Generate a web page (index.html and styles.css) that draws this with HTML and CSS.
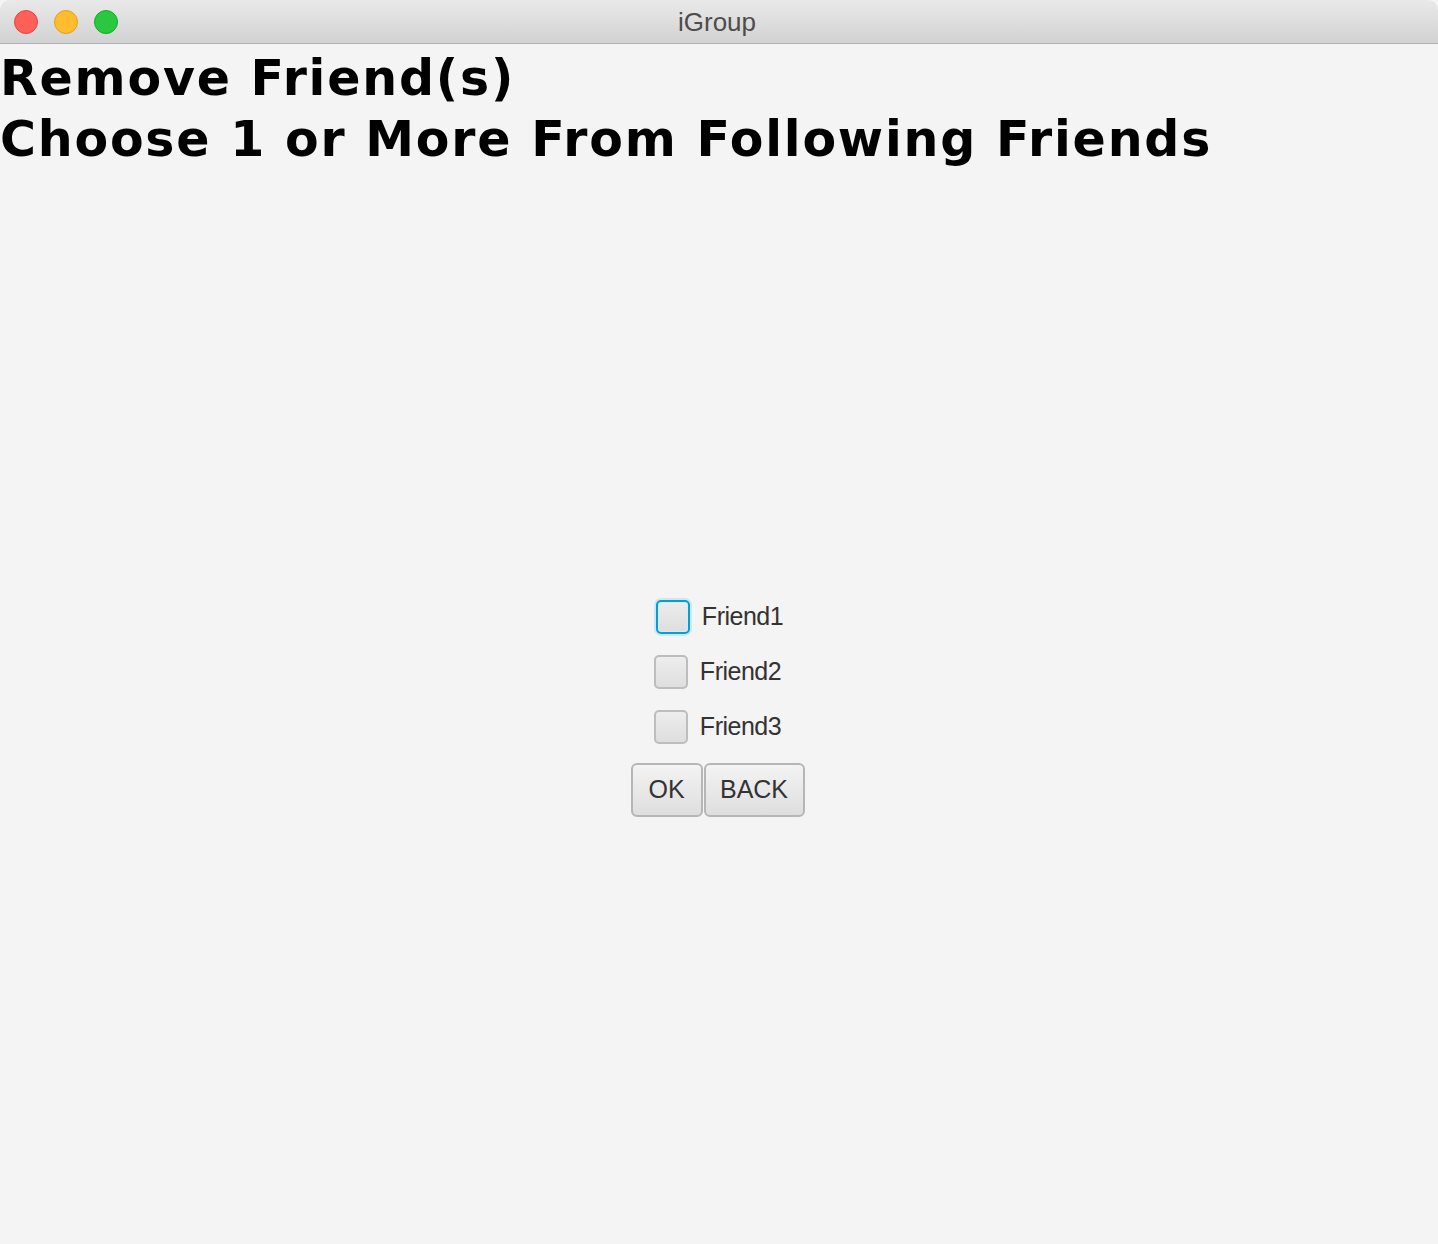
FILE: index.html
```html
<!DOCTYPE html>
<html>
<head>
<meta charset="utf-8">
<title>iGroup</title>
<link rel="stylesheet" href="styles.css">
</head>
<body>
<div class="window">
  <div class="titlebar">
    <div class="lights">
      <span class="light red"></span>
      <span class="light yellow"></span>
      <span class="light green"></span>
    </div>
    <div class="title">iGroup</div>
  </div>
  <div class="content">
    <div class="headings">
      <h1 class="heading">Remove Friend(s)</h1>
      <h1 class="heading">Choose 1 or More From Following Friends</h1>
    </div>
    <div class="center">
      <div class="group">
        <label class="check-row"><span class="box focused"></span><span class="check-label">Friend1</span></label>
        <label class="check-row"><span class="box"></span><span class="check-label">Friend2</span></label>
        <label class="check-row"><span class="box"></span><span class="check-label">Friend3</span></label>
        <div class="buttons">
          <button class="btn btn-ok">OK</button>
          <button class="btn btn-back">BACK</button>
        </div>
      </div>
    </div>
  </div>
</div>
</body>
</html>
```

FILE: styles.css
```css
html, body {
  margin: 0;
  padding: 0;
  height: 100%;
  background: #f4f4f4;
}
.window {
  width: 1438px;
  height: 1244px;
  display: flex;
  flex-direction: column;
  background: #f4f4f4;
  overflow: hidden;
  border-radius: 10px 10px 0 0;
}
.titlebar {
  height: 43px;
  flex: 0 0 43px;
  position: relative;
  background: linear-gradient(#e9e9e9, #d2d2d2);
  border-bottom: 1px solid #b1b1b1;
  display: flex;
  align-items: center;
  justify-content: center;
}
.lights {
  position: absolute;
  left: 14px;
  top: 10px;
  display: flex;
  gap: 16px;
}
.light {
  width: 24px;
  height: 24px;
  border-radius: 50%;
  box-sizing: border-box;
}
.red { background: #fe5f57; border: 1px solid #e2463f; }
.yellow { background: #febc2e; border: 1px solid #e1a116; }
.green { background: #29c840; border: 1px solid #12ac28; }
.title {
  font-family: "Liberation Sans", Arial, sans-serif;
  font-size: 26px;
  color: #4d4d4d;
  margin-left: -4px;
  margin-top: 2px;
}
.content {
  flex: 1;
  display: flex;
  flex-direction: column;
}
.headings {
  padding-top: 4px;
}
.heading {
  margin: 0;
  font-family: "DejaVu Sans", Verdana, sans-serif;
  font-weight: bold;
  font-size: 49px;
  line-height: 61px;
  color: #000;
  letter-spacing: 1.8px;
}
.center {
  flex: 1;
  display: flex;
  align-items: center;
  justify-content: center;
  padding-top: 2px;
  padding-right: 3px;
}
.group {
  display: flex;
  flex-direction: column;
  align-items: center;
  gap: 21px;
}
.check-row {
  display: flex;
  align-items: center;
  gap: 12px;
}
.box {
  width: 34px;
  height: 34px;
  box-sizing: border-box;
  border-radius: 5px;
  border: 2px solid #bdbdbd;
  background: linear-gradient(#ededed, #dedede);
}
.box.focused {
  border: 2px solid #049ed5;
  box-shadow: 0 0 0 2px #cde8f4, inset 0 0 0 1px #d6ebf5;
  margin-left: 4px;
}
.check-label {
  font-family: "Liberation Sans", Arial, sans-serif;
  font-size: 25px;
  color: #333;
  letter-spacing: -0.5px;
}
.buttons {
  display: flex;
  gap: 1px;
  margin-top: -2px;
}
.btn {
  height: 54px;
  box-sizing: border-box;
  border: 2px solid #b6b6b6;
  border-radius: 6px;
  background: linear-gradient(#f3f3f3, #dedede);
  font-family: "Liberation Sans", Arial, sans-serif;
  font-size: 25px;
  color: #333;
  padding: 0;
}
.btn-ok { width: 72px; }
.btn-back { width: 101px; }
```
